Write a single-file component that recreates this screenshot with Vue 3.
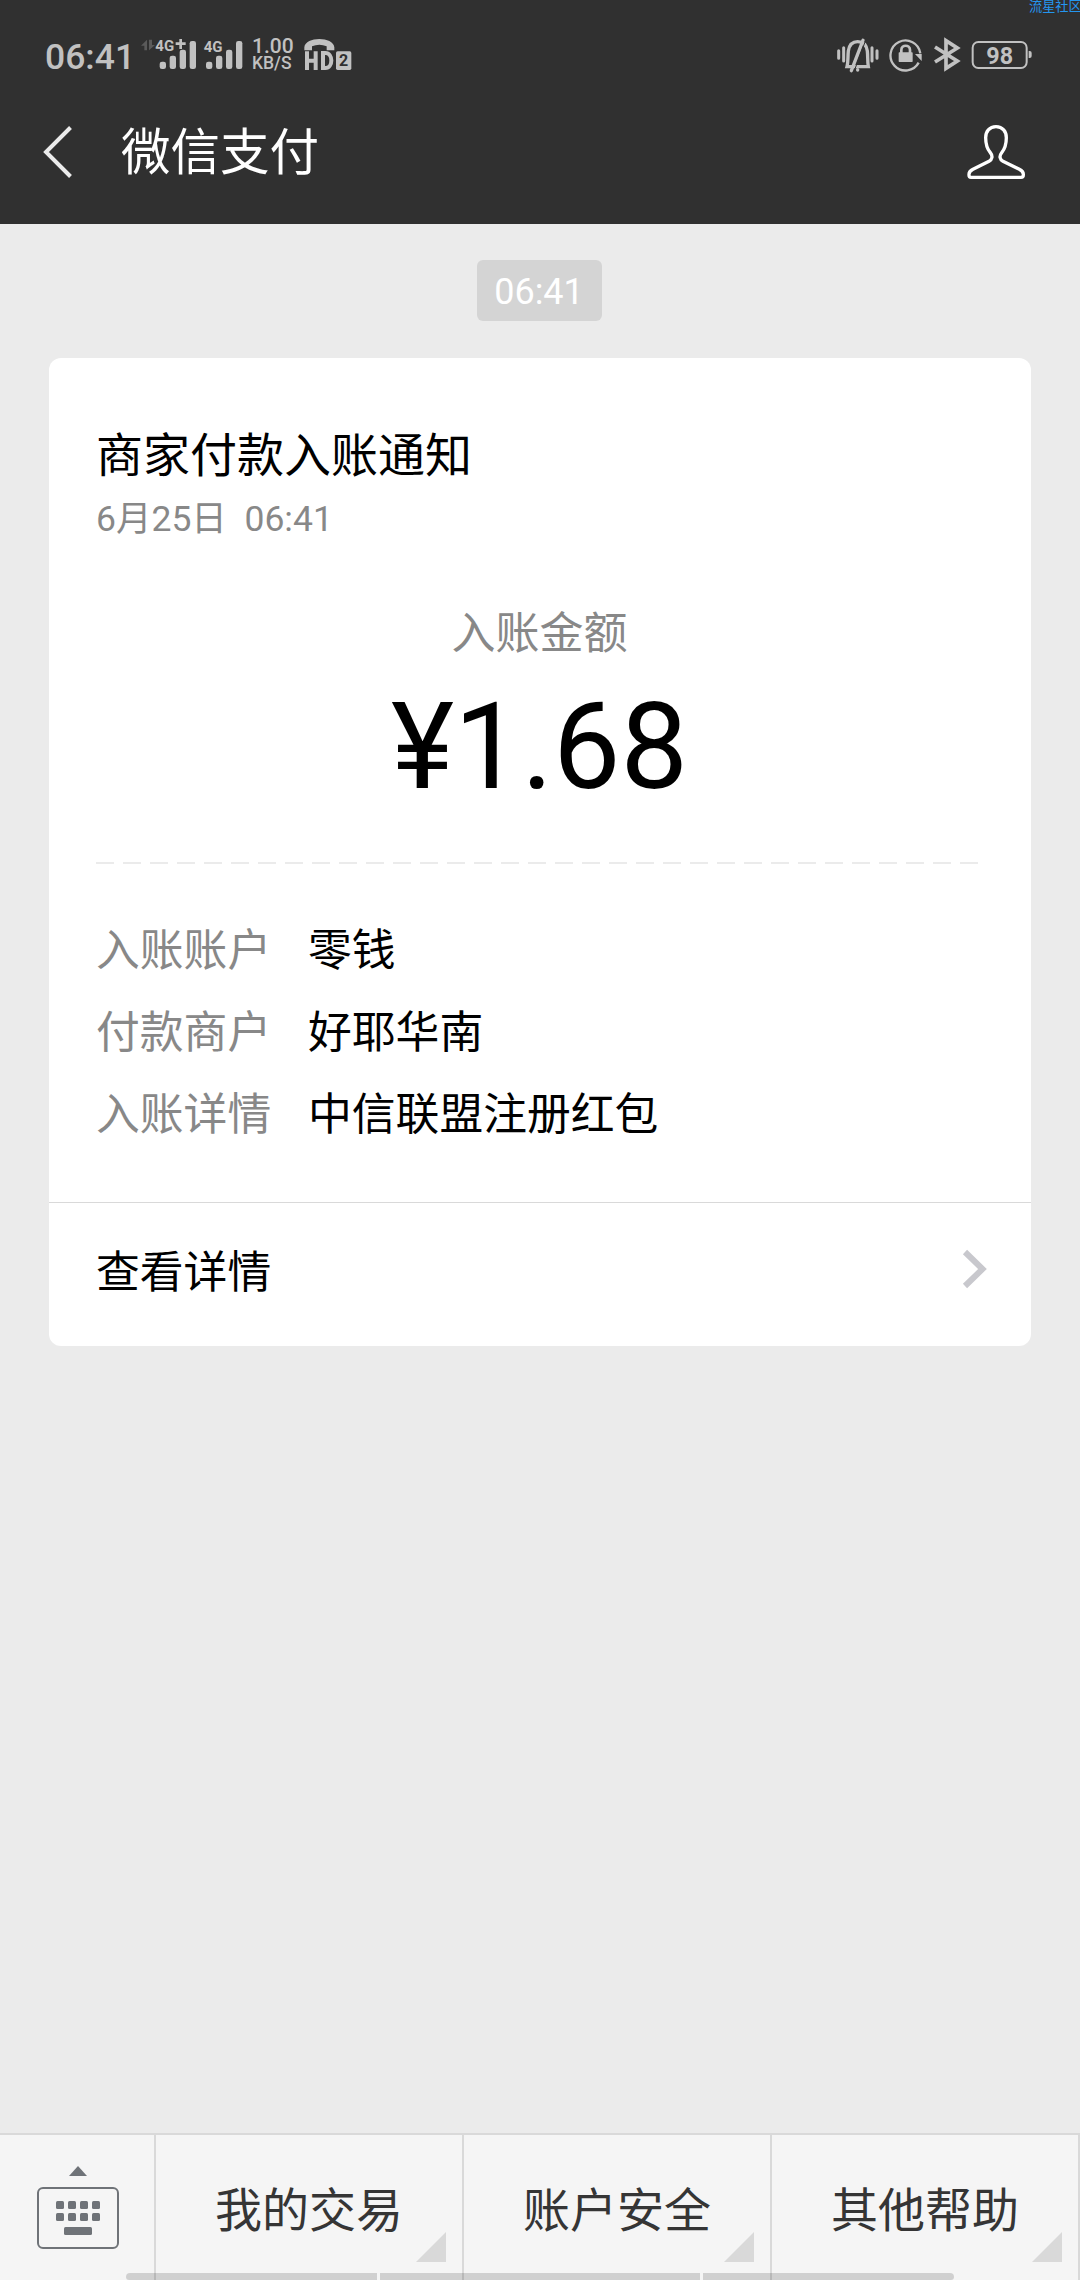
<script setup>
const details = [
  { label: '入账账户', value: '零钱' },
  { label: '付款商户', value: '好耶华南' },
  { label: '入账详情', value: '中信联盟注册红包' },
]
const menus = ['我的交易', '账户安全', '其他帮助']
const keyColumns = [56, 68, 80, 92]
</script>

<template>
  <div class="screen">
    <header class="header">
      <div class="status">
        <span class="clock">06:41</span>
        <svg class="signals" width="112" height="36" viewBox="0 0 336 108">
          <path d="M18 19V51H10V37H0zM24 19V51L42 35H33V19z" transform="translate(3 10)" fill="#5a5a5a" />
          <g fill="#c1c1c1">
            <text x="46" y="62" class="net">4G</text>
            <path d="M118 27h8v10h11v8h-11v12h-8V45h-11v-8h11z" />
            <rect x="59" y="95" width="19" height="22" rx="7" />
            <rect x="89" y="77" width="19" height="40" rx="7" />
            <rect x="119" y="59" width="19" height="58" rx="7" />
            <rect x="149" y="33" width="19" height="84" rx="7" />
            <text x="191" y="65" class="net">4G</text>
            <rect x="198" y="95" width="19" height="22" rx="7" />
            <rect x="228" y="77" width="19" height="40" rx="7" />
            <rect x="258" y="59" width="19" height="58" rx="7" />
            <rect x="288" y="33" width="19" height="84" rx="7" />
          </g>
        </svg>
        <div class="speed"><span class="rate">1.00</span><span class="unit">KB/S</span></div>
        <svg class="hd" width="48" height="34" viewBox="0 0 144 102">
          <path d="M1 37V28C4 -5 88 -5 91 28V37H68V25Q46 16 24 25V37z" fill="#c1c1c1" />
          <path d="M9 40V96M35 40V96M9 68H35M57 45V90H64C88 90 88 45 64 45z" fill="none" stroke="#c1c1c1" stroke-width="12" />
          <rect x="96" y="40" width="46" height="56" rx="5" fill="#c1c1c1" />
          <text x="105" y="85" class="sim">2</text>
        </svg>
        <div class="status-right">
          <svg width="42" height="36" viewBox="50 110 126 108">
            <g fill="none" stroke="#c1c1c1" stroke-width="9" stroke-linecap="round">
              <path d="M55 151V174M70 142V182M155 142V182M170 151V174" />
              <path d="M80 199H144C141 182 143 169 141 152C138 132 128 124 112 124C96 124 87 132 84 152C82 172 84 184 80 199z" stroke-width="10" stroke-linecap="butt" />
              <path d="M128 120L93 211M112 208V209" stroke-width="10" />
            </g>
            <path d="M136 120L102 211" stroke="#303030" stroke-width="3" />
          </svg>
          <svg width="34" height="36" viewBox="208 112 102 108">
            <path d="M297 189A45 45 0 1 1 302 161" fill="none" stroke="#c1c1c1" stroke-width="7" />
            <path d="M286 163H306V184z" fill="#c1c1c1" />
            <rect x="237" y="158" width="42" height="29" rx="2" fill="#c1c1c1" />
            <path d="M245 160V151C245 134 271 134 271 151V160" fill="none" stroke="#c1c1c1" stroke-width="8" />
          </svg>
          <svg width="28" height="36" viewBox="338 112 84 108">
            <path d="M344 142L411 184L377 206V123L411 145L344 187" fill="none" stroke="#c1c1c1" stroke-width="11" />
          </svg>
          <svg width="61" height="30" viewBox="454 120 183 90">
            <rect x="459" y="126" width="162" height="78" rx="17" fill="none" stroke="#c1c1c1" stroke-width="6" />
            <path d="M627 153h3q6 0 6 6v9q0 6-6 6h-3z" fill="#c1c1c1" />
            <text x="540" y="191" class="battery">98</text>
          </svg>
        </div>
        <div class="mark">流星社区</div>
      </div>
      <nav class="nav">
        <svg width="30" height="52" viewBox="0 0 30 52">
          <path d="M27.5 1.5L3 26L27.5 50.5" fill="none" stroke="#ebebeb" stroke-width="4" />
        </svg>
        <h1>微信支付</h1>
        <svg class="person" width="60" height="56" viewBox="108 102 180 168">
          <path d="M198 110C178 110 167 125 167 143C167 165 172 177 181 188C189 198 187 208 177 214L129 238Q117 244 117 253V256Q117 262 123 262H273Q280 262 280 255V253Q280 244 268 238L219 214C209 208 207 198 215 188C224 177 229 165 229 143C229 125 218 110 198 110z" fill="none" stroke="#fff" stroke-width="10" />
        </svg>
      </nav>
    </header>

    <main class="chat">
      <time class="stamp">06:41</time>
      <article class="card">
        <div class="body">
          <h2>商家付款入账通知</h2>
          <div class="date">6月25日&nbsp; 06:41</div>
          <div class="caption">入账金额</div>
          <div class="amount">¥1.68</div>
          <div class="dashes"></div>
          <div v-for="d in details" :key="d.label" class="row">
            <span class="label">{{ d.label }}</span><span>{{ d.value }}</span>
          </div>
        </div>
        <div class="more">
          <span>查看详情</span>
          <svg width="26" height="40" viewBox="0 0 26 40">
            <path d="M3 3L20.500 20L3 37" fill="none" stroke="#c8c8cd" stroke-width="6" />
          </svg>
        </div>
      </article>
    </main>

    <footer class="footer">
      <div class="keyboard">
        <svg width="84" height="86" viewBox="36 2165 84 86">
          <g fill="#6f7378">
            <path d="M78 2166L87 2176H69z" />
            <template v-for="x in keyColumns" :key="x">
              <rect :x="x" y="2201" width="8" height="8" rx="1.500" />
              <rect :x="x" y="2213" width="8" height="8" rx="1.500" />
            </template>
            <rect x="64" y="2227" width="28" height="8" rx="1.500" />
          </g>
          <rect x="38" y="2188" width="80" height="60" rx="5" fill="none" stroke="#6f7378" stroke-width="2" />
        </svg>
      </div>
      <div v-for="m in menus" :key="m" class="menu">{{ m }}<i class="corner"></i></div>
      <div class="gesture"><i></i><i></i><i></i></div>
    </footer>
  </div>
</template>

<style>
body {
  margin: 0;
}
</style>

<style scoped>
.screen {
  width: 1080px;
  height: 2280px;
  display: flex;
  flex-direction: column;
  overflow: hidden;
  background: #ebebeb;
  color: #000;
  font-family: Roboto, "Noto Sans CJK SC", sans-serif;
}
svg {
  display: block;
  flex: none;
}
.header {
  height: 224px;
  background: #303030;
}
.status {
  position: relative;
  height: 84px;
  box-sizing: border-box;
  padding: 30px 48px 0 45px;
  display: flex;
  align-items: flex-start;
  color: #c1c1c1;
}
.clock {
  width: 95px;
  margin-top: 5px;
  font-size: 35.500px;
  font-weight: 500;
  line-height: 44px;
}
.signals {
  overflow: visible;
}
.net {
  font-size: 45px;
  font-weight: 700;
}
.speed {
  width: 52px;
  display: flex;
  flex-direction: column;
  white-space: nowrap;
  font-weight: 500;
}
.rate {
  margin-top: 6px;
  font-size: 21px;
  line-height: 20px;
}
.unit {
  font-size: 17.500px;
  line-height: 14px;
}
.hd {
  margin-top: 8px;
}
.sim {
  fill: #303030;
  font-size: 48px;
  font-weight: 700;
}
.status-right {
  margin-left: auto;
  height: 50px;
  display: flex;
  align-items: center;
  gap: 10px;
}
.battery {
  fill: #c1c1c1;
  font-size: 70px;
  font-weight: 700;
  text-anchor: middle;
}
.mark {
  position: absolute;
  top: -2px;
  left: 1029px;
  font-size: 13.200px;
  line-height: 18px;
  white-space: nowrap;
  color: #2496f0;
}
.nav {
  height: 136px;
  padding: 0 54px 0 43px;
  display: flex;
  align-items: center;
}
h1 {
  margin: 2px 0 0 48px;
  font-size: 49.500px;
  font-weight: 400;
  line-height: 60px;
  color: #fff;
}
.person {
  margin-left: auto;
}
.chat {
  flex: 1;
  padding: 36px 49px 0;
  display: flex;
  flex-direction: column;
  align-items: center;
}
.stamp {
  width: 125px;
  height: 61px;
  margin-right: 2px;
  border-radius: 6px;
  background: #d4d4d4;
  color: #fff;
  font-size: 36px;
  line-height: 65px;
  text-align: center;
}
.card {
  width: 982px;
  height: 988px;
  margin-top: 37px;
  border-radius: 12px;
  background: #fff;
  display: flex;
  flex-direction: column;
}
.body {
  height: 844px;
  padding: 0 48px 0 47px;
  box-sizing: border-box;
}
h2 {
  margin: 68px 0 0;
  font-size: 47px;
  font-weight: 400;
  line-height: 60px;
}
.date {
  margin-top: 8px;
  font-size: 35.500px;
  line-height: 50px;
  color: #888;
}
.caption {
  margin-top: 60px;
  font-size: 44px;
  line-height: 60px;
  text-align: center;
  color: #888;
}
.amount {
  margin-top: 13px;
  font-size: 120px;
  line-height: 140px;
  text-align: center;
}
.dashes {
  height: 2px;
  margin: 45px 4px 46px 0;
  background: repeating-linear-gradient(90deg, #ebebeb 0 18px, transparent 18px 27px);
}
.row {
  display: flex;
  font-size: 43.800px;
  line-height: 82px;
}
.label {
  width: 212px;
  color: #888;
}
.more {
  flex: 1;
  padding: 0 43px 12px 47px;
  border-top: 1px solid #d9d9d9;
  display: flex;
  align-items: center;
  justify-content: space-between;
  font-size: 43.800px;
}
.footer {
  position: relative;
  height: 145px;
  border-top: 2px solid #d9d9d9;
  background: #f5f5f5;
  display: flex;
}
.keyboard {
  width: 154px;
  padding: 30px 0 0 36px;
  box-sizing: border-box;
}
.menu {
  position: relative;
  width: 306px;
  border-left: 2px solid #d9d9d9;
  font-size: 47px;
  line-height: 151px;
  text-align: center;
  color: #353535;
}
.menu:nth-of-type(4) {
  border-right: 2px solid #d9d9d9;
}
.corner {
  position: absolute;
  right: 16px;
  top: 97px;
  width: 30px;
  height: 30px;
  background: #d9d9d9;
  clip-path: polygon(100% 0, 100% 100%, 0 100%);
}
.gesture {
  position: absolute;
  left: 126px;
  bottom: 0;
  width: 828px;
  height: 7px;
  display: flex;
  gap: 3px;
  border-radius: 4px 4px 3px 3px;
  overflow: hidden;
}
.gesture i {
  width: 251px;
  background: rgba(0, 0, 0, 0.15);
}
.gesture i:nth-child(2) {
  width: 320px;
}
</style>
